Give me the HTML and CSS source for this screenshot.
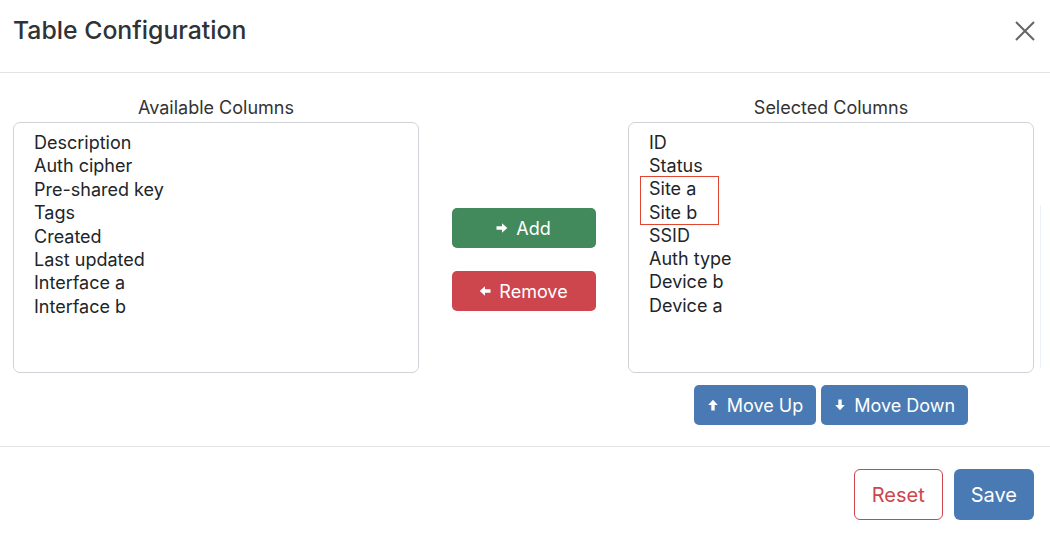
FILE: index.html
```html
<!DOCTYPE html>
<html lang="en">
<head>
<meta charset="utf-8">
<title>Table Configuration</title>
<link rel="stylesheet" href="styles.css">
</head>
<body>
<div class="modal">
  <header class="modal-header">
    <h1 class="modal-title">Table Configuration</h1>
    <button class="close" aria-label="Close">
      <svg width="20" height="20" viewBox="0 0 20 20"><path d="M1 1 L19 19 M19 1 L1 19" stroke="#666" stroke-width="2" fill="none"/></svg>
    </button>
  </header>
  <main class="modal-body">
    <section class="col">
      <div class="col-label">Available Columns</div>
      <div class="listbox">
        <div class="opt">Description</div>
        <div class="opt">Auth cipher</div>
        <div class="opt">Pre-shared key</div>
        <div class="opt">Tags</div>
        <div class="opt">Created</div>
        <div class="opt">Last updated</div>
        <div class="opt">Interface a</div>
        <div class="opt">Interface b</div>
      </div>
    </section>
    <section class="mid">
      <button class="btn btn-green btn-wide">
        <svg class="ico" viewBox="0 0 12 12"><path d="M0.5 4.3 H6 V1.2 L11.3 6 L6 10.8 V7.7 H0.5 Z" fill="#fff"/></svg>Add
      </button>
      <button class="btn btn-red btn-wide">
        <svg class="ico" viewBox="0 0 12 12"><path d="M11.5 4.3 H6 V1.2 L0.7 6 L6 10.8 V7.7 H11.5 Z" fill="#fff"/></svg>Remove
      </button>
    </section>
    <section class="col">
      <div class="col-label">Selected Columns</div>
      <div class="listbox">
        <div class="opt">ID</div>
        <div class="opt">Status</div>
        <div class="hl">
          <div class="opt">Site a</div>
          <div class="opt">Site b</div>
        </div>
        <div class="opt">SSID</div>
        <div class="opt">Auth type</div>
        <div class="opt">Device b</div>
        <div class="opt">Device a</div>
      </div>
      <div class="order-btns">
        <button class="btn btn-blue">
          <svg class="ico" viewBox="0 0 12 12"><path d="M4.3 11.5 V6 H1.2 L6 0.7 L10.8 6 H7.7 V11.5 Z" fill="#fff"/></svg>Move Up
        </button>
        <button class="btn btn-blue">
          <svg class="ico" viewBox="0 0 12 12"><path d="M4.3 0.5 V6 H1.2 L6 11.3 L10.8 6 H7.7 V0.5 Z" fill="#fff"/></svg>Move Down
        </button>
      </div>
    </section>
    <div class="scroll-trace"></div>
  </main>
  <footer class="modal-footer">
    <button class="btn btn-outline-red btn-lg">Reset</button>
    <button class="btn btn-blue btn-lg">Save</button>
  </footer>
</div>
</body>
</html>
```
FILE: styles.css
```css
* { box-sizing: border-box; }
html, body { margin: 0; padding: 0; background: #fff; }
body {
  font-family: Inter, "Noto Sans", "Liberation Sans", sans-serif;
  color: #212529;
  width: 1050px;
  height: 536px;
  overflow: hidden;
}
.modal { width: 1050px; }
.modal-header {
  height: 73px;
  border-bottom: 1px solid #e1e3e6;
  display: flex;
  align-items: flex-start;
  justify-content: space-between;
  padding: 14px 15px 0 13px;
}
.modal-title {
  margin: 0;
  font-size: 24.8px;
  line-height: 32px;
  font-weight: 500;
  color: #2f3337;
}
.close {
  background: none;
  border: 0;
  padding: 0;
  width: 20px;
  height: 20px;
  margin-top: 7px;
}
.close svg { display: block; }
.modal-body {
  position: relative;
  height: 374px;
  border-bottom: 1px solid #e1e3e6;
  display: grid;
  grid-template-columns: 406px 209px 406px;
  padding: 24px 16px 0 13px;
}
.col { display: flex; flex-direction: column; }
.col-label {
  text-align: center;
  font-size: 18px;
  color: #333;
  height: 25px;
  line-height: 22px;
}
.listbox {
  height: 251px;
  border: 1px solid #cfd3d7;
  border-radius: 7px;
  padding: 8px 20px;
}
.opt {
  font-size: 18px;
  line-height: 23.4px;
  height: 23.4px;
  color: #212529;
}
.hl {
  margin: -1.5px -9px -1.5px -9px;
  padding: 0 8px;
  width: 79px;
  border: 1.5px solid #e0452f;
}
.mid {
  display: flex;
  flex-direction: column;
  align-items: center;
  padding-top: 111px;
  gap: 23px;
}
.btn {
  border: 0;
  border-radius: 5px;
  color: #fff;
  font-family: inherit;
  font-size: 18px;
  height: 40px;
  display: inline-flex;
  align-items: center;
  justify-content: center;
  gap: 8px;
  padding: 0 13px;
}
.ico { width: 12px; height: 12px; }
.btn-wide { width: 144px; }
.btn-green { background: #428a5b; }
.btn-red { background: #cd454d; }
.btn-blue { background: #4a7ab3; }
.order-btns {
  display: flex;
  justify-content: center;
  gap: 5px;
  margin-top: 12px;
}
.scroll-trace {
  position: absolute;
  left: 1040px;
  top: 132px;
  width: 1px;
  height: 163px;
  background: #edf1f8;
}
.modal-footer {
  display: flex;
  justify-content: flex-end;
  gap: 11px;
  padding: 22px 16px 0 0;
}
.btn-lg {
  height: 51px;
  font-size: 20px;
  border-radius: 6px;
  padding: 0 17px;
}
.btn-outline-red {
  background: #fff;
  color: #cd454d;
  border: 1px solid #cd454d;
}
```
